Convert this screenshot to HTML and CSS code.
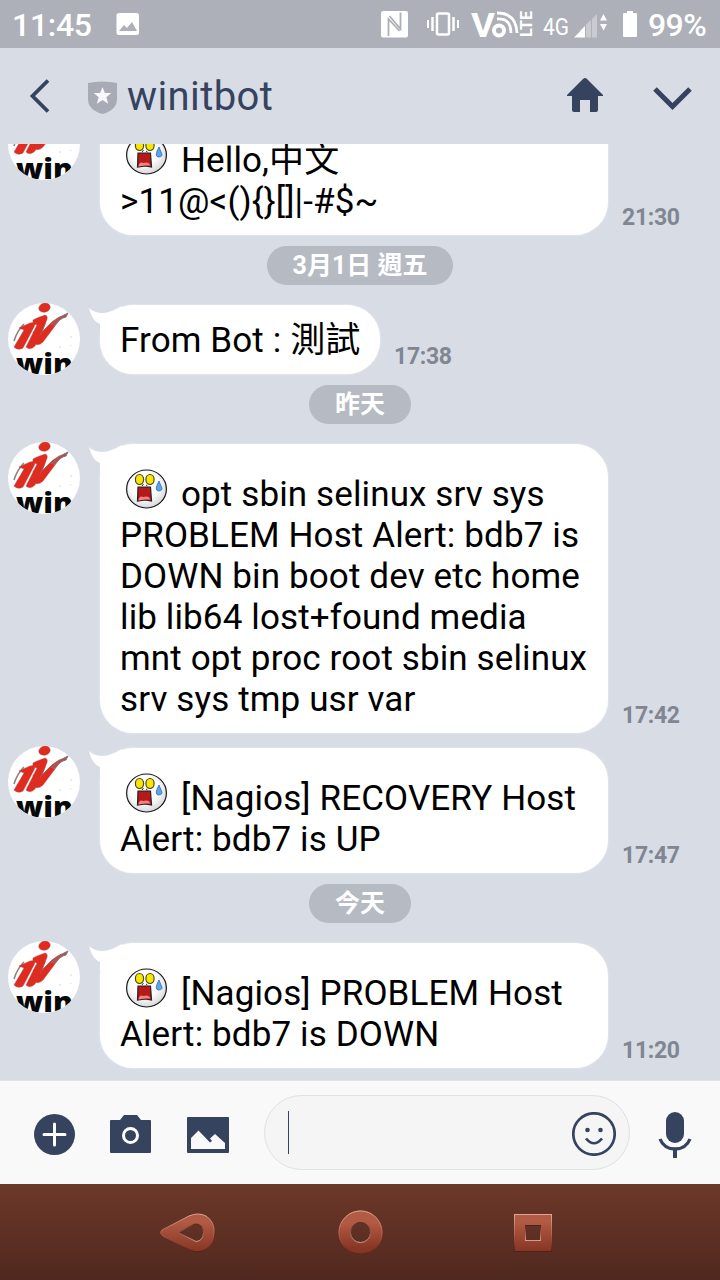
FILE: index.html
```
<!DOCTYPE html>
<html lang="zh-Hant">
<head>
<meta charset="utf-8">
<title>winitbot</title>
<link rel="stylesheet" href="styles.css">
</head>
<body>
<svg class="defs" aria-hidden="true">
  <defs>
    <radialGradient id="face" cx=".45" cy=".4" r=".6"><stop offset=".55" stop-color="#fff"/><stop offset="1" stop-color="#d9d9d9"/></radialGradient>
    <linearGradient id="copper" x1="0" y1="0" x2="0" y2="1"><stop offset=".2" stop-color="#b25b44"/><stop offset="1" stop-color="#873524"/></linearGradient>
    <linearGradient id="shine" x1="0" y1="0" x2="0" y2="1"><stop offset="0" stop-color="#dda596"/><stop offset=".55" stop-color="#b25b44"/><stop offset="1" stop-color="#562016"/></linearGradient>
    <linearGradient id="shineIn" x1="0" y1="0" x2="0" y2="1"><stop offset="0" stop-color="#522219"/><stop offset="1" stop-color="#d59a8b"/></linearGradient>
    <clipPath id="round"><circle cx="36" cy="36" r="36"/></clipPath>
  </defs>
  <symbol id="logo" viewBox="0 0 72 72">
    <circle cx="36" cy="36" r="36" fill="#fff"/>
    <path d="M6 38Q9 28 16 21M25 30L32 24M29 33L37 20L33 31L46 18" fill="none" stroke="#8a8283" stroke-width="1.600"/>
    <g fill="#df2b20" stroke="#a8473f" stroke-width=".4">
      <ellipse cx="36.500" cy="4.700" rx="5.800" ry="4.500" transform="rotate(-15 36.500 4.700)"/>
      <path d="M11 25L22 20Q29 18 26 24L15 45Q10 48 6 44L16 27Z"/>
      <path d="M29 15L37 12Q41 13 38 19L27 43Q22 48 18 44L29 22Q24 21 25 17Z"/>
      <path d="M36 27Q48 14 54 13L50 19L35 39Q30 44 25 40Z"/>
    </g>
    <path d="M43 22Q51 13 60 10L58 14Q52 15 46 23" fill="#b94b44" stroke="#817879" stroke-width="1"/>
    <path d="M63 33v2M52 43v2M63 42v1" stroke="#d5d5d5"/>
    <g clip-path="url(#round)"><text x="8" y="71" class="logo-text" textLength="57" lengthAdjust="spacingAndGlyphs">win</text></g>
  </symbol>
  <symbol id="shock" viewBox="0 0 41 40">
    <ellipse cx="20.500" cy="20" rx="19.900" ry="19" fill="url(#face)" stroke="#17171c" stroke-width="1.200"/>
    <path d="M16 17l1.500-2M20 16l1.500 1" stroke="#333"/>
    <g fill="#f8e800" stroke="#504c10" stroke-width="1.200"><ellipse cx="13.500" cy="10.500" rx="4.100" ry="5"/><ellipse cx="24" cy="10.500" rx="4.100" ry="5"/></g>
    <path d="M12 18h12.500l1 14-6-1-8 1z" fill="#b71818" stroke="#222" stroke-width="1.200"/>
    <path d="M12.500 31q1-5 5-3 5-2 7 2.500l-5 0-7 1z" fill="#f5827c"/>
    <path d="M33 12q-5 9-1 10 6 0 3-5z" fill="#57a7ef" stroke="#3067a6" stroke-width=".8"/>
  </symbol>
  <symbol id="tail" viewBox="0 0 34 28"><path d="M1 3Q6 8 15 8Q22 8 34 1V20L12 28V19Q4 16 1 3Z" fill="#fff"/></symbol>
</svg>

<div class="phone">
  <div class="status">
    <span class="clock">11:45</span>
    <svg class="pic" width="24" height="24" viewBox="0 0 24 24"><rect x=".5" y="1" width="22.500" height="22" rx="2.500" fill="#fff"/><path d="M3 19l5-6 3 3 5-6 5 9z" fill="#adb0b9"/></svg>
    <div class="signals">
      <svg class="nfc" width="30" height="30" viewBox="0 0 30 30"><rect x="1" y="2" width="27" height="26.500" rx="2" fill="#fff"/><path d="M8.500 27V10L19.500 22M20.500 3.500V20L9.500 7" fill="none" stroke="#adb0b9" stroke-width="1.800"/></svg>
      <svg class="vibrate" width="34" height="26" viewBox="0 0 34 26"><rect x="11" y="2.500" width="12" height="21" rx="1.500" fill="none" stroke="#fff" stroke-width="2.500"/><path d="M6.500 6v14M27.500 6v14" stroke="#fff" stroke-width="2.500"/><path d="M2 9v8M32 9v8" stroke="#fff" stroke-width="2"/></svg>
      <svg class="volte" width="64" height="32" viewBox="0 0 64 32"><text x="1" y="28.500" class="vo" textLength="24" lengthAdjust="spacingAndGlyphs">V</text><circle cx="29" cy="22.500" r="5" fill="none" stroke="#fff" stroke-width="4"/><path d="M27 11q14-1 14 14M27 5q19 0 20 20" fill="none" stroke="#fff" stroke-width="2.800"/><text transform="translate(62 29) rotate(-90)" class="lte" textLength="26" lengthAdjust="spacingAndGlyphs">LTE</text></svg>
      <svg class="cell" width="66" height="30" viewBox="0 0 66 30"><text x="0" y="25.500" class="fourg" textLength="26" lengthAdjust="spacingAndGlyphs">4G</text><path d="M31 28.500L37 22.500V28.500zM37 22L42 17V28.500H37z" fill="#fff"/><path d="M43 15.500L48 11V28.500H43zM49 10L54 5V28.500H49z" fill="#c9cbd1"/><path d="M60.500 5l3.500 6.500h-7zM60.500 21.500l3.500-6.500h-7z" fill="#fff"/></svg>
      <svg class="battery" width="14" height="26" viewBox="0 0 14 26"><path d="M4 0h6v2h3q1 0 1 1v22q0 1-1 1H1q-1 0-1-1V3q0-1 1-1h3z" fill="#fff"/></svg>
      <span class="percent">99%</span>
    </div>
  </div>

  <div class="header">
    <svg class="back" width="24" height="36" viewBox="0 0 24 36"><path d="M20 2.500L4.500 18 20 33.500" fill="none" stroke="#35435f" stroke-width="3.800"/></svg>
    <svg class="shield" width="30" height="34" viewBox="0 0 30 34"><path d="M0 2q15-3 29 0v16q0 11-14.500 15Q0 29 0 18z" fill="#a7abb5"/><path d="M14.500 6l2.400 6h6.400l-5 4.200 1.900 6.500-5.700-3.800-5.700 3.800 1.900-6.500-5-4.200h6.400z" fill="#f7f8fa"/></svg>
    <h1>winitbot</h1>
    <svg class="home" width="38" height="36" viewBox="0 0 38 36"><path d="M19 1q1 0 2 1l16 16v1h-5v14q0 2-2 2h-6V23H14v12H8q-2 0-2-2V19H1v-1L17 2q1-1 2-1z" fill="#35435f"/></svg>
    <svg class="down" width="42" height="26" viewBox="0 0 42 26"><path d="M3 3l17.500 17.500L38 3" fill="none" stroke="#35435f" stroke-width="5"/></svg>
  </div>

  <div class="chat">
    <div class="row">
      <svg class="avatar"><use href="#logo"/></svg>
      <div class="bubble wide alert"><svg class="tail"><use href="#tail"/></svg><svg class="emoji"><use href="#shock"/></svg>Hello,中文<br><span class="symbols">&gt;11@&lt;(){}[]|-#$~</span></div>
      <span class="time">21:30</span>
    </div>
    <div class="day">3月1日 週五</div>
    <div class="row">
      <svg class="avatar"><use href="#logo"/></svg>
      <div class="bubble short"><svg class="tail"><use href="#tail"/></svg>From Bot : 測試</div>
      <span class="time">17:38</span>
    </div>
    <div class="day">昨天</div>
    <div class="row next">
      <svg class="avatar"><use href="#logo"/></svg>
      <div class="bubble wide alert"><svg class="tail"><use href="#tail"/></svg><svg class="emoji"><use href="#shock"/></svg>opt sbin selinux srv sys<br>PROBLEM Host Alert: bdb7 is<br>DOWN bin boot dev etc home<br>lib lib64 lost+found media<br>mnt opt proc root sbin selinux<br>srv sys tmp usr var</div>
      <span class="time">17:42</span>
    </div>
    <div class="row">
      <svg class="avatar"><use href="#logo"/></svg>
      <div class="bubble wide alert"><svg class="tail"><use href="#tail"/></svg><svg class="emoji"><use href="#shock"/></svg>[Nagios] RECOVERY Host<br>Alert: bdb7 is UP</div>
      <span class="time">17:47</span>
    </div>
    <div class="day">今天</div>
    <div class="row">
      <svg class="avatar"><use href="#logo"/></svg>
      <div class="bubble wide alert"><svg class="tail"><use href="#tail"/></svg><svg class="emoji"><use href="#shock"/></svg>[Nagios] PROBLEM Host<br>Alert: bdb7 is DOWN</div>
      <span class="time">11:20</span>
    </div>
  </div>

  <div class="composer">
    <svg class="plus" width="42" height="42" viewBox="0 0 42 42"><circle cx="20.500" cy="20.500" r="20.500" fill="#35435f"/><path d="M10 20.500h21M20.500 10v21" stroke="#fff" stroke-width="3" stroke-linecap="round"/></svg>
    <svg class="camera" width="42" height="38" viewBox="0 0 42 38"><path d="M1 5h9l4-5h13l4 5h9q1 0 1 1v31q0 1-1 1H1q-1 0-1-1V6q0-1 1-1z" fill="#35435f"/><circle cx="20.500" cy="20.500" r="7" fill="none" stroke="#fff" stroke-width="3"/></svg>
    <svg class="gallery" width="42" height="36" viewBox="0 0 42 36"><rect width="42" height="36" rx="1" fill="#35435f"/><path d="M4 21l7.500-7.500L23 25.500l2-1.500L23 21.500l5-4.500 10 9v6H4z" fill="#f9f9f9"/></svg>
    <div class="input">
      <span class="caret"></span>
      <svg class="smile" width="44" height="44" viewBox="0 0 44 44"><circle cx="22" cy="22" r="20.700" fill="none" stroke="#35435f" stroke-width="2.700"/><circle cx="15.500" cy="18" r="2.300" fill="#35435f"/><circle cx="28.500" cy="18" r="2.300" fill="#35435f"/><path d="M14 26.500q8 9.500 16 0" fill="none" stroke="#35435f" stroke-width="2.700"/></svg>
    </div>
    <svg class="mic" width="34" height="46" viewBox="0 0 34 46"><rect x="8" y="0" width="18" height="31" rx="9" fill="#35435f"/><path d="M2 27Q6 37 17 37T32 27" fill="none" stroke="#35435f" stroke-width="3.300"/><path d="M17 37v9" stroke="#35435f" stroke-width="4"/></svg>
  </div>

  <div class="nav">
    <svg class="nav-back" width="56" height="42" viewBox="0 0 56 42"><path d="M2 18L29 4Q38 0 46 4Q55 10 54 21Q53 33 46 37Q38 42 30 38L3 24Q-1 21 2 18ZM18 20.500L36 29.500Q43 29 43.500 20.500Q43 12 35 12Z" fill="url(#copper)" fill-rule="evenodd"/><path d="M2 18L29 4Q38 0 46 4Q55 10 54 21Q53 33 46 37Q38 42 30 38L3 24Q-1 21 2 18Z" fill="none" stroke="url(#shine)"/><path d="M18 20.500L36 29.500Q43 29 43.500 20.500Q43 12 35 12Z" fill="none" stroke="url(#shineIn)"/></svg>
    <svg class="nav-home" width="46" height="46" viewBox="0 0 46 46"><circle cx="22.500" cy="22.500" r="16" fill="none" stroke="url(#copper)" stroke-width="12"/><circle cx="22.500" cy="22.500" r="21.500" fill="none" stroke="url(#shine)"/><circle cx="22.500" cy="22.500" r="10" fill="none" stroke="url(#shineIn)"/></svg>
    <svg class="nav-recent" width="40" height="40" viewBox="0 0 40 40"><path d="M1 1H38V38H1ZM12 12V28H28V12Z" fill="url(#copper)" fill-rule="evenodd"/><rect x="1.500" y="1.500" width="37" height="37" fill="none" stroke="url(#shine)"/><rect x="12.500" y="12.500" width="15" height="15" fill="none" stroke="url(#shineIn)"/></svg>
  </div>
</div>
</body>
</html>
```
FILE: styles.css
```
* { box-sizing: border-box; }
body { margin: 0; font-family: Roboto, "Noto Sans CJK TC", sans-serif; }
svg { display: block; flex: none; }
.defs { position: absolute; width: 0; height: 0; }
.phone { width: 720px; height: 1280px; display: flex; flex-direction: column; overflow: hidden; background: #d8dce5; }

.status { flex: none; height: 48px; padding: 0 13px; background: #adb0b9; color: #fff; display: flex; align-items: center; font-size: 32px; font-weight: 500; line-height: 48px; }
.clock { width: 103px; padding-top: 2px; margin-left: -1px; margin-right: 1px; letter-spacing: -0.3px; }
.signals { margin-left: auto; display: flex; align-items: center; height: 48px; }
.vibrate { margin-left: 16px; }
.volte { margin-left: 10px; overflow: visible; }
.cell { margin-left: 9px; }
.battery { margin-left: 14px; }
.percent { margin-left: 11px; width: 59px; padding-top: 2px; white-space: nowrap; letter-spacing: -0.6px; }
.vo { font: 700 34px/1 Roboto, sans-serif; fill: #fff; }
.lte { font: 700 16px/1 Roboto, sans-serif; fill: #fff; }
.fourg { font: 400 24px/1 Roboto, sans-serif; fill: #fff; }

.header { flex: none; height: 96px; padding: 0 26px 0 28px; display: flex; align-items: center; color: #35435f; }
.shield { margin-left: 36px; margin-top: 3px; }
.header h1 { margin: 2px 0 0 9px; font-size: 40px; font-weight: 400; line-height: 48px; letter-spacing: 0.4px; }
.home { margin-left: auto; margin-top: -2px; }
.down { margin-left: 48px; margin-top: 6px; }

.chat { flex: none; height: 936px; padding: 0 8px 12px; display: flex; flex-direction: column; justify-content: flex-end; overflow: hidden; }
.row { flex: none; display: flex; }
.row.next { margin-bottom: 13px; }
.avatar { width: 72px; height: 72px; margin-bottom: -1px; }
.logo-text { font: 800 29px/1 "Open Sans", sans-serif; fill: #080808; }
.bubble { position: relative; margin: 2px 0 0 20px; padding: 14px 20px; min-height: 69px; border-radius: 33px; background: #fff; box-shadow: 0 0 2px #f4f6f9; color: #000; font-size: 35px; line-height: 41px; letter-spacing: 0.12px; white-space: nowrap; }
.wide { width: 508px; }
.short { width: 280px; padding: 15px 0 13px 20px; }
.alert { padding-top: 30px; padding-bottom: 13px; }
.tail { position: absolute; left: -12px; top: 0; width: 34px; height: 28px; }
.emoji { display: inline-block; width: 41px; height: 40px; margin: -10px 14px 0 6px; vertical-align: -3px; }
.time { align-self: flex-end; margin-left: 14px; padding-bottom: 4px; font-size: 23px; font-weight: 700; line-height: 26px; letter-spacing: -0.3px; color: #808692; }
.day { flex: none; align-self: center; height: 39px; margin: 11px 0 18px; padding: 0 26px; border-radius: 20px; background: #b6bac3; color: #fff; font-size: 25px; font-weight: 700; line-height: 40px; }

.composer { flex: none; height: 104px; padding: 0 28px 0 34px; border-top: 1px solid #e1e2e4; background: #f9f9f9; display: flex; align-items: center; }
.plus { margin-top: 4px; }
.camera { margin-left: 34px; margin-top: 2px; }
.gallery { margin-left: 35px; margin-top: 4px; }
.input { width: 366px; height: 75px; margin-left: 35px; padding: 0 13px 0 23px; border: 1px solid #dfe0e8; border-radius: 38px; background: #f5f5f5; display: flex; align-items: center; justify-content: space-between; }
.caret { width: 1px; height: 43px; background: #35435f; }
.smile { margin-top: 3px; }
.mic { margin-left: 28px; margin-top: 4px; }

.nav { flex: none; height: 96px; padding: 2px 0 0 160px; background: linear-gradient(#6d3829, #50281f); display: flex; align-items: center; }
.nav-home { margin-left: 122px; }
.nav-recent { margin-left: 129px; }
```
